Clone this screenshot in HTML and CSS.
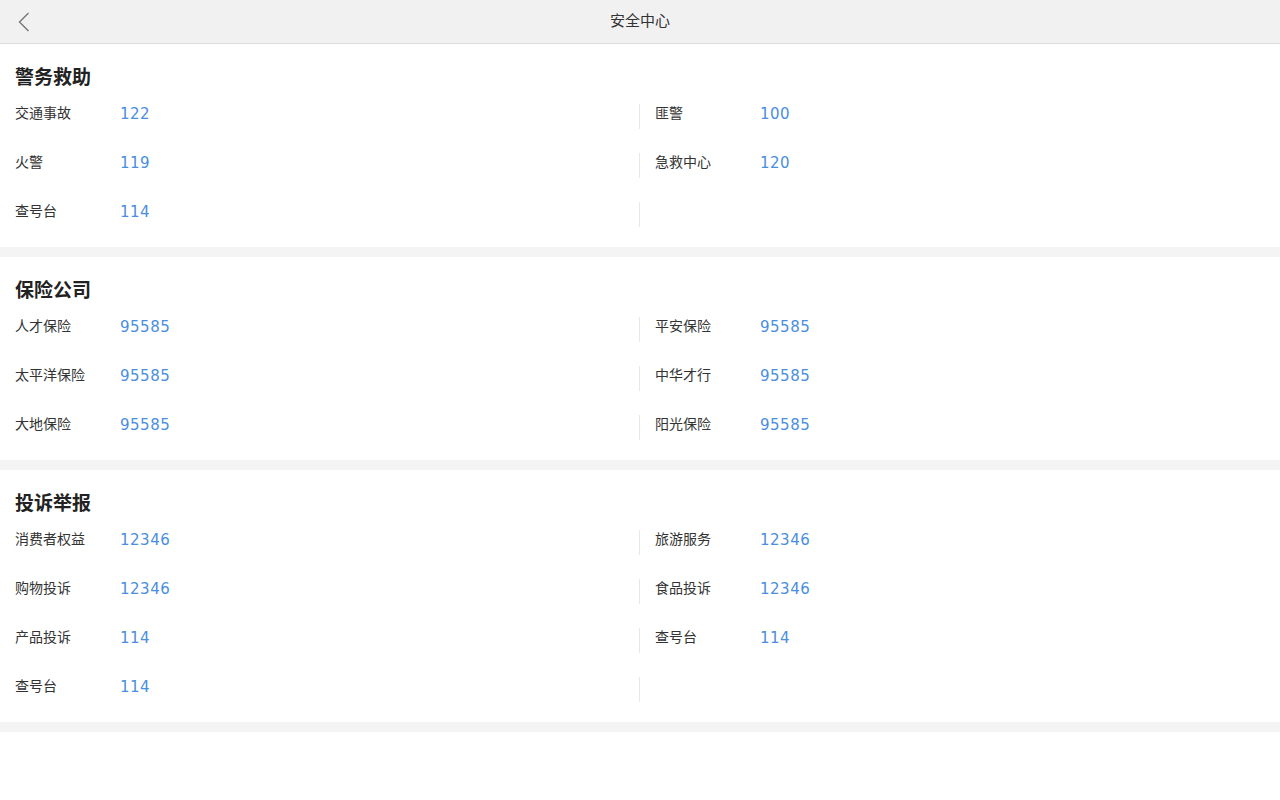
FILE: index.html
```html
<!DOCTYPE html>
<html lang="zh-CN">
<head>
<meta charset="utf-8">
<title>安全中心</title>
<link rel="stylesheet" href="styles.css">
</head>
<body>
<header class="topbar">
  <span class="back">
    <svg width="12" height="20" viewBox="0 0 12 20"><path d="M10.5 1 L1.5 10 L10.5 19" fill="none" stroke="#777" stroke-width="1.4"/></svg>
  </span>
  <h1 class="topbar-title">安全中心</h1>
</header>

<section class="block">
  <h2 class="block-title">警务救助</h2>
  <div class="grid">
    <div class="cell"><span class="label">交通事故</span><span class="num">122</span></div>
    <div class="cell right"><span class="label">匪警</span><span class="num">100</span></div>
    <div class="cell"><span class="label">火警</span><span class="num">119</span></div>
    <div class="cell right"><span class="label">急救中心</span><span class="num">120</span></div>
    <div class="cell"><span class="label">查号台</span><span class="num">114</span></div>
    <div class="cell right"></div>
  </div>
</section>

<section class="block">
  <h2 class="block-title">保险公司</h2>
  <div class="grid">
    <div class="cell"><span class="label">人才保险</span><span class="num">95585</span></div>
    <div class="cell right"><span class="label">平安保险</span><span class="num">95585</span></div>
    <div class="cell"><span class="label">太平洋保险</span><span class="num">95585</span></div>
    <div class="cell right"><span class="label">中华才行</span><span class="num">95585</span></div>
    <div class="cell"><span class="label">大地保险</span><span class="num">95585</span></div>
    <div class="cell right"><span class="label">阳光保险</span><span class="num">95585</span></div>
  </div>
</section>

<section class="block">
  <h2 class="block-title">投诉举报</h2>
  <div class="grid">
    <div class="cell"><span class="label">消费者权益</span><span class="num">12346</span></div>
    <div class="cell right"><span class="label">旅游服务</span><span class="num">12346</span></div>
    <div class="cell"><span class="label">购物投诉</span><span class="num">12346</span></div>
    <div class="cell right"><span class="label">食品投诉</span><span class="num">12346</span></div>
    <div class="cell"><span class="label">产品投诉</span><span class="num">114</span></div>
    <div class="cell right"><span class="label">查号台</span><span class="num">114</span></div>
    <div class="cell"><span class="label">查号台</span><span class="num">114</span></div>
    <div class="cell right"></div>
  </div>
</section>
</body>
</html>
```

FILE: styles.css
```css
html, body {
  margin: 0;
  padding: 0;
  background: #fff;
  font-family: "Noto Sans CJK SC", "Noto Sans", sans-serif;
  color: #333;
}

.topbar {
  position: relative;
  height: 43px;
  background: #f1f1f1;
  border-bottom: 1px solid #dcdcdc;
  display: flex;
  align-items: flex-start;
  justify-content: center;
}

.back {
  position: absolute;
  left: 18px;
  top: 12px;
  width: 12px;
  height: 20px;
  display: block;
}

.back svg { display: block; }

.topbar-title {
  margin: 10px 0 0;
  font-size: 15px;
  font-weight: normal;
  color: #333;
  line-height: 20px;
}

.block {
  background: #fff;
  padding: 19px 0 20px;
  border-bottom: 10px solid #f4f4f4;
}

.block-title {
  margin: 0 0 15px 15px;
  font-size: 19px;
  line-height: 26px;
  font-weight: bold;
  color: #222;
}

.grid {
  display: grid;
  grid-template-columns: 639px 1fr;
  row-gap: 24px;
}

.cell {
  height: 25px;
  display: flex;
  align-items: flex-start;
  padding-left: 15px;
}

.cell.right {
  border-left: 1px solid #e8e8e8;
}

.label {
  width: 105px;
  font-size: 14px;
  line-height: 17px;
  color: #333;
}

.num {
  font-family: "DejaVu Sans", sans-serif;
  font-size: 15px;
  line-height: 21px;
  letter-spacing: 0.5px;
  color: #4a8ee0;
}
```
